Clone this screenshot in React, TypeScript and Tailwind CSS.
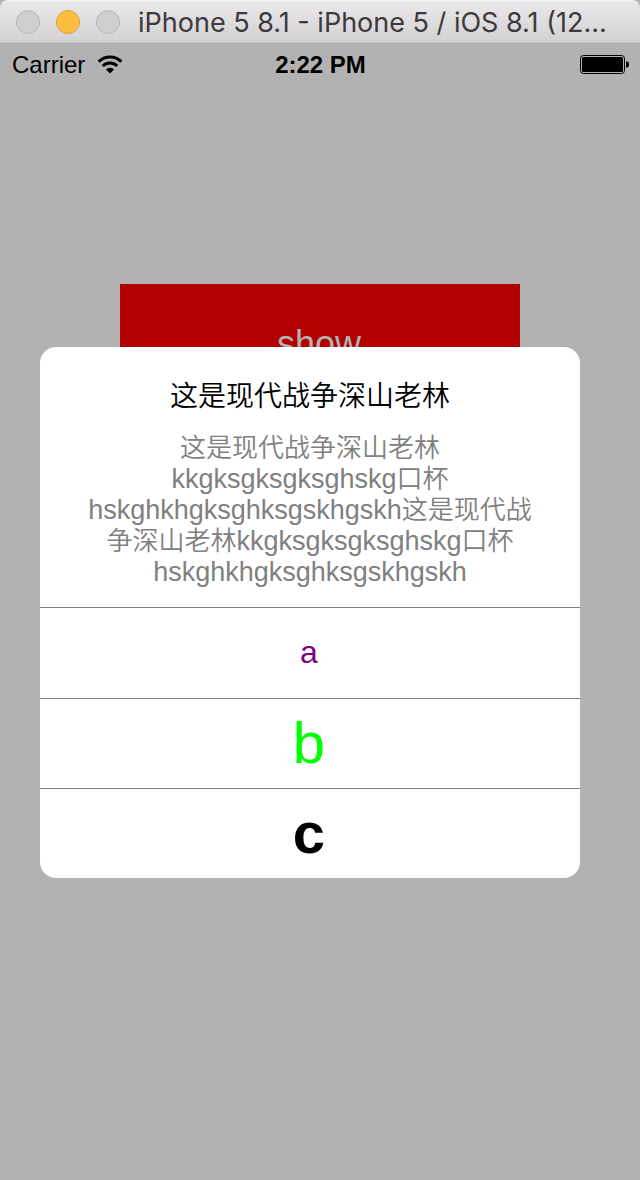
const MESSAGE = [
  { lang: "zh", text: "这是现代战争深山老林" },
  { lang: "en", text: "kkgksgksgksghskg" },
  { lang: "zh", text: "口杯" },
  { lang: "en", text: "hskghkhgksghksgskhgskh" },
  { lang: "zh", text: "这是现代战争深山老林" },
  { lang: "en", text: "kkgksgksgksghskg" },
  { lang: "zh", text: "口杯" },
  { lang: "en", text: "hskghkhgksghksgskhgskh" },
];

function TitleBar() {
  return (
    <header className="bg-[#b2b2b2]">
      <div className="flex h-[43px] items-center rounded-t-lg border-t border-b border-t-[#f4f3f4] border-b-[#c4c2c4] bg-linear-to-b from-[#ebe9eb] to-[#d3d1d3] pl-4 pr-5">
        <div className="flex shrink-0 gap-4">
          <button type="button" aria-label="Close" className="size-6 rounded-full border border-[#b8b7b8] bg-[#d0cfd0]" />
          <button type="button" aria-label="Minimize" className="size-6 rounded-full border border-[#dfa033] bg-[#fdbd40]" />
          <button type="button" aria-label="Zoom" className="size-6 rounded-full border border-[#b8b7b8] bg-[#d0cfd0]" />
        </div>
        <h1 className="ml-[18px] min-w-0 flex-1 truncate pt-0.5 font-['Inter',sans-serif] text-[27px] leading-8 text-[#3c3a3c]">
          iPhone 5 8.1 - iPhone 5 / iOS 8.1 (12...
        </h1>
      </div>
    </header>
  );
}

function WifiIcon() {
  return (
    <svg viewBox="0 0 26 20" className="h-5 w-[26px]" fill="none" stroke="#000" aria-hidden="true">
      <path d="M1.6 6.6A16.2 16.2 0 0 1 24.4 6.6" strokeWidth="3" />
      <path d="M5.7 10.9A10.4 10.4 0 0 1 20.3 10.9" strokeWidth="3" />
      <path d="M13 18.6L8.9 14.4A5.8 5.8 0 0 1 17.1 14.4Z" fill="#000" stroke="none" />
    </svg>
  );
}

function BatteryIcon() {
  return (
    <svg viewBox="0 0 49 20" className="h-5 w-[49px]" aria-hidden="true">
      <rect x="0.5" y="0.5" width="44" height="18" rx="3" fill="none" stroke="#000" />
      <rect x="2" y="2" width="41" height="15" rx="1.5" fill="#000" />
      <path d="M46 6.5h1q2 0 2 3t-2 3h-1z" fill="#000" />
    </svg>
  );
}

function StatusBar() {
  return (
    <div className="grid h-10 grid-cols-3 items-center pt-1 pr-[11px] pl-3 text-2xl leading-7 text-black">
      <div className="flex items-center gap-3">
        <span>Carrier</span>
        <WifiIcon />
      </div>
      <time className="text-center font-bold">2:22 PM</time>
      <div className="flex justify-end">
        <BatteryIcon />
      </div>
    </div>
  );
}

function AlertDialog() {
  return (
    <section
      role="dialog"
      aria-labelledby="alert-title"
      aria-describedby="alert-message"
      className="absolute top-[347px] right-[60px] left-10 overflow-hidden rounded-2xl bg-white text-center"
    >
      <div className="px-10 pt-[34px] pb-[19px]">
        <h2 id="alert-title" className="text-[28px] leading-8 font-[350] text-black">
          这是现代战争深山老林
        </h2>
        <p id="alert-message" className="mt-5 text-[26px] leading-[31px] font-[350] text-[#808080]">
          {MESSAGE.map((run, i) => (
            <span key={i} lang={run.lang} className={run.lang === "en" ? "text-[27px] leading-none" : undefined}>
              {run.text}
            </span>
          ))}
        </p>
      </div>
      <div className="flex flex-col divide-y divide-[#808080] border-t border-[#808080]">
        <button type="button" className="h-[91px] pr-0.5 pb-0.5 text-[32px] text-[#800080]">
          a
        </button>
        <button type="button" className="h-[90px] pr-0.5 pb-0.5 text-[58px] leading-none text-[#00ff00]">
          b
        </button>
        <button type="button" className="h-[89px] pr-0.5 pb-0.5 text-[58px] leading-none font-bold text-black">
          c
        </button>
      </div>
    </section>
  );
}

export default function App() {
  return (
    <div className="relative min-h-screen bg-[#b2b2b2] font-['Liberation_Sans','Noto_Sans_CJK_SC',sans-serif]">
      <TitleBar />
      <StatusBar />
      <main className="px-[120px] pt-[201px]">
        <button type="button" className="h-30 w-full bg-[#b20000] pr-0.5 text-4xl text-[#b2b2b2]">
          show
        </button>
      </main>
      <AlertDialog />
    </div>
  );
}
